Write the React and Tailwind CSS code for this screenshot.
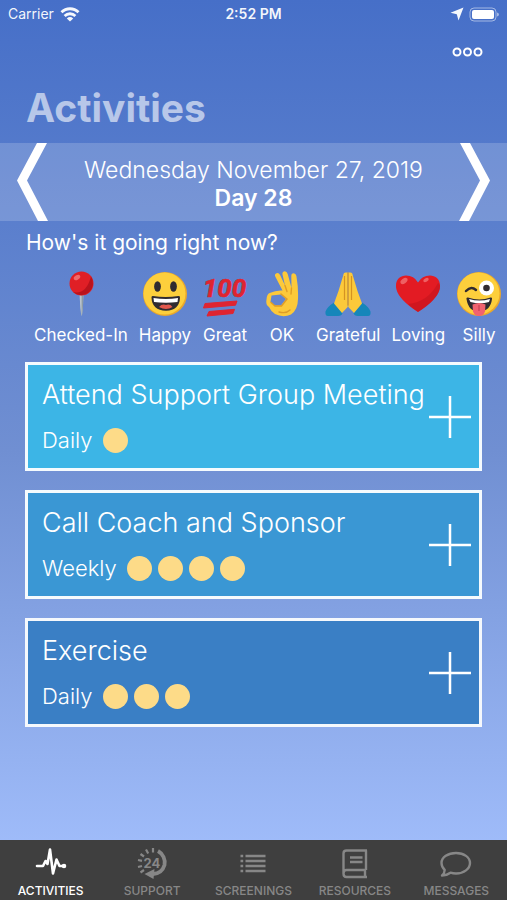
import React from 'react';

const PinEmoji = () => (
    <svg viewBox="0 0 46 46" className="size-[46px]">
        <path d="M21.5 22h4l-.6 15-1 7.5h-.6l-1-7.5z" fill="#b9c4cc" />
        <path d="M23.6 22h1.9l-.6 15-1 7.5h-.3z" fill="#8b9aa6" />
        <circle cx="23.5" cy="12.5" r="12" fill="#e01f26" />
        <path d="M33 5.5a12 12 0 0 1-18 15.600q13 3 18-15.600z" fill="#b9131c" />
        <ellipse cx="19" cy="6.500" rx="3.500" ry="2.200" fill="#ef6a6c" transform="rotate(-30 19 6.500)" />
    </svg>
);

const HappyEmoji = () => (
    <svg viewBox="0 0 46 46" className="size-[46px]">
        <circle cx="23" cy="23" r="22" fill="#eba82a" />
        <circle cx="22.500" cy="22.500" r="21" fill="#fdcf3c" />
        <ellipse cx="15.500" cy="15.500" rx="3.400" ry="5.200" fill="#302b30" />
        <ellipse cx="31.500" cy="15.500" rx="3.400" ry="5.200" fill="#302b30" />
        <path d="M9.500 26.500q0-1.500 1.500-1.400 12.500 2 25.500 0 1.500-.1 1.500 1.400-.5 13-14 13.300-14-.3-14.500-13.300z" fill="#302b30" />
        <path d="M11.500 27q12.500 2 24.500 0l-.5 4q-11.500 1.500-23.500 0z" fill="#fff" />
        <path d="M17 36q3-3.500 7-2 4-1.500 6.500 2-3 2-6.500 2t-7-2z" fill="#e2574c" />
    </svg>
);

const HundredEmoji = () => (
    <svg viewBox="0 0 46 46" className="size-[46px]">
        <text x="22.500" y="26" textAnchor="middle" fontFamily="Roboto, 'Liberation Sans', sans-serif" fontSize="26" fontWeight="700" fontStyle="italic" fill="#df2431" stroke="#df2431" strokeWidth=".6">100</text>
        <path d="M3 32.500 35 30l-1.500 4.200L1.500 37zM7 40.500l25.500-2.200-1.500 4.200L5 45z" fill="#df2431" stroke="#df2431" strokeLinejoin="round" />
    </svg>
);

const OkEmoji = () => (
    <svg viewBox="0 0 46 46" className="size-[46px]">
        <path
            fillRule="evenodd"
            d="M23.500 19.500 16.500 6q-1.500-3 1-3.800 2.300-.8 3.700 2L26 14.500 23.500 3.500q-.5-3 2-3.300 2.300-.2 3.200 2.700L32.500 17 32.300 5q0-2.700 2.300-2.800 2.200 0 2.800 2.800Q39.500 17 39 28q-.2 11-7 15.500-8 3.500-16-.5-4-2.500-6-7-3.500-2-2.500-7.500.3-5.500 3.200-6.500 6.300-3 12.800-2.500zM12.500 24.500 11.500 31l4.500 3.500h6l5-6.500-5.500-4.500z"
            fill="#fcc93a"
        />
        <path d="M12 31.500 16 35h6.500l5.500-7-6-5M26 14.500l2 6M32.500 17l-.5 6M20 41q7 2 11-2" fill="none" stroke="#df9d27" strokeWidth="1.400" strokeLinecap="round" />
    </svg>
);

const PrayEmoji = () => (
    <svg viewBox="0 0 46 46" className="size-[46px]">
        <path d="M9 31.500 17.500 42Q17 45 13 45H3q-3 0-2.500-4.500Q2 36 9 31.500zM37 31.500 28.500 42q.5 3 4.500 3h10q3 0 2.500-4.500Q44 36 37 31.500z" fill="#1686ba" />
        <path d="M22.700 1.500h-2q-2.200 0-2.500 3L13.500 20 9 32.500l8 9.500 5.700-6zM23.300 1.500h2q2.200 0 2.500 3L32.500 20 37 32.500 29 42l-5.700-6z" fill="#fcc93a" />
        <path d="M23 1.500v33M19.500 5v24M26.500 5v24" fill="none" stroke="#d59322" strokeWidth="1.200" />
    </svg>
);

const HeartEmoji = () => (
    <svg viewBox="0 0 46 46" className="size-[46px]">
        <path d="M23 41Q4 29 1.300 18C-.5 9 5 4.500 11 4.500q8 0 12 7 4-7 12-7c6 0 11.500 4.500 9.700 13.500Q42 29 23 41z" fill="#e31b23" />
        <path d="M44.700 18Q42 29 23 41q-6-4-10-8 20-2 30-21 2.500 1 1.700 6z" fill="#c3141d" opacity=".6" />
        <ellipse cx="9" cy="10" rx="4" ry="2.400" fill="#ee6063" transform="rotate(-38 9 10)" />
        <ellipse cx="31" cy="9" rx="3" ry="1.800" fill="#ee6063" transform="rotate(-32 31 9)" />
    </svg>
);

const SillyEmoji = () => (
    <svg viewBox="0 0 46 46" className="size-[46px]">
        <circle cx="23" cy="23" r="22" fill="#eba82a" />
        <circle cx="22.500" cy="22.500" r="21" fill="#fdcf3c" />
        <path d="M10 20q5-5.500 10-1" fill="none" stroke="#302b30" strokeWidth="2.500" strokeLinecap="round" />
        <circle cx="30.500" cy="17" r="7.500" fill="#fff" />
        <circle cx="30.500" cy="17" r="3.300" fill="#302b30" />
        <path d="M10.500 28q-.5-2 1.500-1.500 11.500 4 22.500 0 2-.5 1.500 1.500-1.500 12-12.500 12.500T10.500 28z" fill="#302b30" />
        <path d="M13 28q10.500 3 21 0l-1 3q-9 2.500-18.500 0z" fill="#fff" />
        <path d="M16.500 33.500q7-3 13 0l-.5 7q-1.500 4.500-6 4.500t-6-4.500z" fill="#f0626e" />
        <path d="M23 34v6" stroke="#c74253" strokeWidth="1.200" />
    </svg>
);

const PulseIcon = () => (
    <svg viewBox="0 0 32 32" className="size-8" fill="none" stroke="currentColor" strokeWidth="2.600" strokeLinecap="round" strokeLinejoin="round">
        <path d="M2 19h6l2.500-5 2 3 2.500-14.500 3 24 3.500-14 3 6.500h4" />
        <circle cx="29" cy="19" r="1" fill="currentColor" />
    </svg>
);

const SupportIcon = () => (
    <svg viewBox="0 0 32 32" className="size-8" fill="none" stroke="currentColor">
        <path d="M22 4A13 13 0 0 1 28.500 18q-2.500 8.500-11.500 9" strokeWidth="3.800" />
        <path d="m8.500 27 10-5-1 10z" fill="currentColor" stroke="none" />
        <path d="M17 1v4.500M10 2.500l2.200 4M4.500 7 8 9.500M2 13l4 .8M2 20l4-1M4.500 25.500 8 23" strokeWidth="2.200" />
        <text x="16" y="21" textAnchor="middle" fontFamily="Inter, sans-serif" fontSize="13" fontWeight="700" fill="currentColor" stroke="none">24</text>
    </svg>
);

const ListIcon = () => (
    <svg viewBox="0 0 32 32" className="size-8" stroke="currentColor" strokeWidth="2.600">
        <path d="M3.500 9H6.200M3.500 14H6.200M3.500 19H6.200M3.500 24H6.200M8.500 9h20M8.500 14h20M8.500 19h20M8.500 24h20" />
    </svg>
);

const BookIcon = () => (
    <svg viewBox="0 0 32 32" className="size-8" fill="none" stroke="currentColor" strokeWidth="2.400" strokeLinejoin="round">
        <path d="M28 3.500H7.500Q4.500 3.500 4.500 6.500v20q0 3.500 3 3.500H28M27 3.500V23M26 23v7M4.500 26.500q0-3.500 3-3.500H27M11 10.500h12.500M11 15h12.500" />
    </svg>
);

const MessageIcon = () => (
    <svg viewBox="0 0 32 32" className="size-8" fill="none" stroke="currentColor" strokeWidth="2.400" strokeLinejoin="round">
        <path d="M16 6C24 6 30 10.300 30 16s-6 10.500-14 10.500q-3 0-5.500-.8-3.500 2.700-8.500 2.800 2.500-2 2.700-5.500Q1.500 20 1.500 16C1.500 10.300 8 6 16 6z" />
    </svg>
);

const moods = [
    { label: 'Checked-In', icon: PinEmoji },
    { label: 'Happy', icon: HappyEmoji },
    { label: 'Great', icon: HundredEmoji },
    { label: 'OK', icon: OkEmoji },
    { label: 'Grateful', icon: PrayEmoji },
    { label: 'Loving', icon: HeartEmoji },
    { label: 'Silly', icon: SillyEmoji },
];

const activities = [
    { title: 'Attend Support Group Meeting', frequency: 'Daily', count: 1, color: 'bg-[#3cb5e6]' },
    { title: 'Call Coach and Sponsor', frequency: 'Weekly', count: 4, color: 'bg-[#3a97d4]' },
    { title: 'Exercise', frequency: 'Daily', count: 3, color: 'bg-[#3a7fc5]' },
];

const tabs = [
    { label: 'ACTIVITIES', icon: PulseIcon, active: true },
    { label: 'SUPPORT', icon: SupportIcon },
    { label: 'SCREENINGS', icon: ListIcon },
    { label: 'RESOURCES', icon: BookIcon },
    { label: 'MESSAGES', icon: MessageIcon },
];

const StatusBar = () => (
    <div className="grid grid-cols-3 items-center h-7 px-2 text-sm text-white/95">
        <div className="flex items-center gap-1.5">
            <span>Carrier</span>
            <svg viewBox="0 0 20 15" className="w-5 h-[15px]" fill="none" stroke="currentColor" strokeWidth="2.800">
                <path d="M1.500 5.300a12 12 0 0 1 17 0M4.600 8.900a7.800 7.800 0 0 1 10.800 0" />
                <path d="M6.800 11.400q3.200-2.600 6.400 0L10 14.600z" fill="currentColor" stroke="none" />
            </svg>
        </div>
        <p className="text-center font-semibold">2:52 PM</p>
        <div className="flex items-center justify-end gap-1">
            <svg viewBox="0 0 14 14" className="size-3.5" fill="currentColor">
                <path d="M13.500.5 8.500 13.500 6.800 7.200.5 5.800z" />
            </svg>
            <svg viewBox="0 0 31 15" className="w-[31px] h-[15px]">
                <rect x="2" y="1" width="26" height="13" rx="4" fill="none" stroke="#fff" strokeOpacity=".5" />
                <rect x="4" y="3" width="22" height="9" rx="2" fill="#fff" />
                <path d="M29 5.500q2 .5 2 2t-2 2z" fill="#fff" fillOpacity=".5" />
            </svg>
        </div>
    </div>
);

const ActivityCard = ({ title, frequency, count, color }) => (
    <li className={`flex items-center border-3 border-white/95 pl-3.5 pr-2 py-3 ${color}`}>
        <div className="flex-1 min-w-0">
            <h2 className="text-[27px] leading-[35px] font-light whitespace-nowrap">{title}</h2>
            <div className="flex items-center gap-2.5 mt-3">
                <span className="text-[22px] leading-8 font-light">{frequency}</span>
                <div className="flex gap-1.5">
                    {Array.from({ length: count }, (_, i) => (
                        <span key={i} className="size-[25px] rounded-full bg-[#fddb88]" />
                    ))}
                </div>
            </div>
        </div>
        <button type="button" aria-label={`Add ${title}`} className="shrink-0">
            <svg viewBox="0 0 42 42" className="size-[42px]" stroke="#fff" strokeWidth="2.500">
                <path d="M21 0v42M0 21h42" />
            </svg>
        </button>
    </li>
);

const App = () => {
    return (
        <div className="min-h-screen flex flex-col overflow-x-hidden text-white font-[Inter,'Liberation_Sans',sans-serif] bg-linear-to-b from-[#466fc8] via-[#708fd2] to-[#a6c2ff]">
            <StatusBar />

            <header>
                <div className="flex justify-end h-12 px-6">
                    <button type="button" aria-label="More options" className="flex items-center">
                        <svg viewBox="0 0 31 10" className="w-[31px] h-2.5" fill="none" stroke="#fff" strokeWidth="2">
                            <circle cx="5" cy="5" r="3.500" />
                            <circle cx="15.500" cy="5" r="3.500" />
                            <circle cx="26" cy="5" r="3.500" />
                        </svg>
                    </button>
                </div>
                <h1 className="h-[67px] px-[26px] pt-2 text-[39px] leading-12 font-bold text-white/60">Activities</h1>
            </header>

            <section className="flex items-stretch justify-between h-[78px] px-4 bg-white/18">
                <button type="button" aria-label="Previous day">
                    <svg viewBox="0 0 32 78" className="w-8 h-[78px]">
                        <path d="M21 0h10L11 37.500 32 78H22L1 37.500z" fill="#fff" />
                    </svg>
                </button>
                <div className="flex flex-col justify-center pt-1 text-center text-[23px] leading-7">
                    <p className="font-light">Wednesday November 27, 2019</p>
                    <p className="font-semibold">Day 28</p>
                </div>
                <button type="button" aria-label="Next day">
                    <svg viewBox="0 0 32 78" className="w-8 h-[78px]">
                        <path d="M11 0H1l20 37.500L0 78h10l21-40.500z" fill="#fff" />
                    </svg>
                </button>
            </section>

            <main>
                <p className="px-[26px] pt-2 text-[21px] leading-7">How's it going right now?</p>
                <div className="flex gap-[11px] pl-[34px] pt-3.5 overflow-hidden">
                    {moods.map((mood) => (
                        <button type="button" key={mood.label} className="flex flex-col items-center shrink-0 min-w-[46px] gap-1.5">
                            <mood.icon />
                            <span className="text-[17px] leading-6">{mood.label}</span>
                        </button>
                    ))}
                </div>

                <ul className="flex flex-col gap-[19px] px-[25px] pt-[15px] pb-6">
                    {activities.map((activity) => (
                        <ActivityCard key={activity.title} {...activity} />
                    ))}
                </ul>
            </main>

            <nav className="mt-auto grid grid-cols-5 h-[60px] bg-[#3f3f3f]">
                {tabs.map((tab) => (
                    <a
                        key={tab.label}
                        href="#"
                        aria-current={tab.active ? 'page' : undefined}
                        className={`flex flex-col items-center pt-[7px] gap-1 ${tab.active ? 'text-white' : 'text-[#878787]'}`}
                    >
                        <tab.icon />
                        <span className="text-xs leading-4 font-medium">{tab.label}</span>
                    </a>
                ))}
            </nav>
        </div>
    );
};

export default App;
